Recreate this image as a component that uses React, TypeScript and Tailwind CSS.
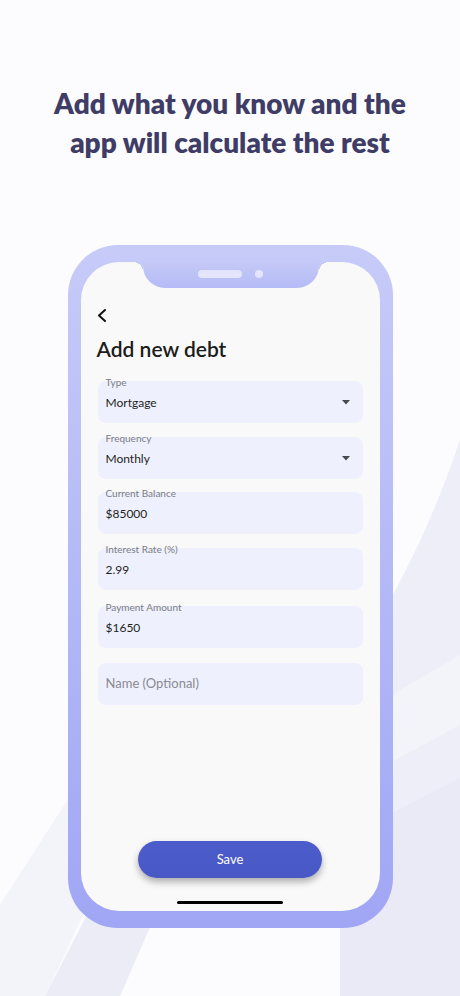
import React from "react";

const Field = ({ label, value, placeholder, dropdown, className = "" }: { label?: string; value?: string; placeholder?: string; dropdown?: boolean; className?: string }) => (
  <div className={`relative h-[42px] rounded-[8px] bg-[#eef1fd] flex items-center pl-[8px] pr-[13px] ${className}`}>
    {label && (
      <span className="absolute left-[8px] top-[-5px] text-[10px] leading-[12px] text-[#7c7c82]">{label}</span>
    )}
    {value && <span className="text-[12px] text-[#1e1e1e] mt-[1px]">{value}</span>}
    {placeholder && <span className="text-[13px] text-[#8a8a92]">{placeholder}</span>}
    {dropdown && (
      <svg className="ml-auto mt-[1px]" width="8" height="5" viewBox="0 0 8 5">
        <path d="M0 0 L8 0 L4 4.5 Z" fill="#4a4a4a" />
      </svg>
    )}
  </div>
);

export default function App() {
  return (
    <div
      className="relative w-[460px] h-[996px] overflow-hidden bg-[#fcfcfe]"
      style={{ fontFamily: "Lato, 'Noto Sans', sans-serif" }}
    >
      <svg className="absolute inset-0" width="460" height="996" viewBox="0 0 460 996">
        <path d="M460 440 C440 500 415 555 390 600 L340 700 L340 996 L460 996 Z" fill="#eeeef8" />
        <path d="M340 725 L460 655 L460 725 L340 790 Z" fill="#f3f3fa" />
        <path d="M340 840 L460 778 L460 996 L340 996 Z" fill="#e9e9f5" opacity="0.8" />
        <path d="M0 905 L90 765 L90 900 L45 996 L0 996 Z" fill="#f3f3fa" />
        <path d="M45 996 L110 870 L175 870 L120 996 Z" fill="#ececf6" />
      </svg>

      <div className="relative flex flex-col items-center">
        <h1 className="mt-[84px] text-center text-[28px] leading-[39px] font-extrabold text-[#3f3c66]">
          Add what you know and the
          <br />
          app will calculate the rest
        </h1>

        <div className="mt-[83px] w-[325px] h-[683px] rounded-[50px] bg-gradient-to-b from-[#c7cbf8] to-[#a0a6f4] pt-[17px] px-[13px] pb-[17px] flex">
          <div className="relative flex-1 rounded-[38px] bg-[#f9f9f9] flex flex-col">
            <div className="absolute left-[62px] top-0 w-[176px] h-[26px] rounded-b-[22px] bg-gradient-to-b from-[#c5c9f7] to-[#b5bbf6] flex items-center justify-center gap-[13px] pb-[2px]">
              <div className="w-[44px] h-[8px] rounded-full bg-[#e3e5fc]" />
              <div className="w-[8px] h-[8px] rounded-full bg-[#e3e5fc]" />
            </div>
            <div className="absolute left-[52px] top-0 w-[10px] h-[10px] bg-[radial-gradient(circle_at_0_100%,transparent_10px,#c6caf7_10px)]" />
            <div className="absolute left-[238px] top-0 w-[10px] h-[10px] bg-[radial-gradient(circle_at_100%_100%,transparent_10px,#c6caf7_10px)]" />

            <div className="pl-[16px] pt-[47px]">
              <svg width="10" height="13" viewBox="0 0 10 13">
                <path d="M8 1 L2 6.5 L8 12" fill="none" stroke="#111" strokeWidth="2" strokeLinecap="round" strokeLinejoin="round" />
              </svg>
            </div>
            <h2 className="pl-[16px] mt-[14px] text-[21px] leading-[26px] font-semibold text-[#1c1c1c]">Add new debt</h2>

            <div className="mt-[19px] mx-[17px] flex flex-col">
              <Field label="Type" value="Mortgage" dropdown />
              <Field className="mt-[14px]" label="Frequency" value="Monthly" dropdown />
              <Field className="mt-[13px]" label="Current Balance" value="$85000" />
              <Field className="mt-[14px]" label="Interest Rate (%)" value="2.99" />
              <Field className="mt-[16px]" label="Payment Amount" value="$1650" />
              <Field className="mt-[15px]" placeholder="Name (Optional)" />
            </div>

            <div className="flex-1" />
            <div className="flex justify-center">
              <button className="w-[184px] h-[37px] rounded-full bg-gradient-to-b from-[#4c5dcb] to-[#4858c5] text-white text-[13px] shadow-[0_4px_7px_rgba(0,0,0,0.3)]">
                Save
              </button>
            </div>
            <div className="mt-[23px] mb-[7px] mx-auto w-[106px] h-[3px] rounded-full bg-black" />
          </div>
        </div>
      </div>
    </div>
  );
}
